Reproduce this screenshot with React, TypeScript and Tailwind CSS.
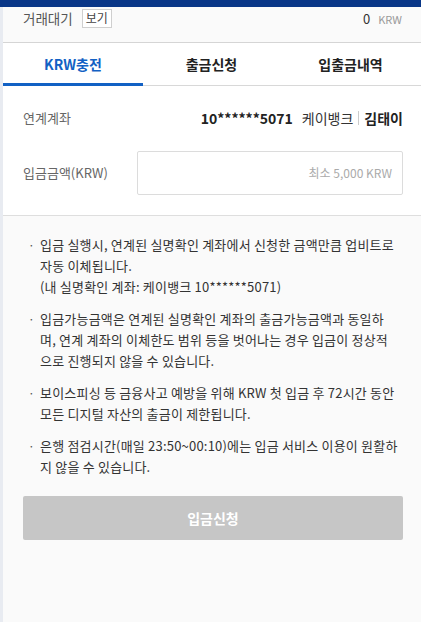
import React from "react";

const font = { fontFamily: '"Noto Sans CJK KR", "Noto Sans", sans-serif' };

export default function App() {
  const bullets: string[][] = [
    [
      "입금 실행시, 연계된 실명확인 계좌에서 신청한 금액만큼 업비트로",
      "자동 이체됩니다.",
      "(내 실명확인 계좌: 케이뱅크 10******5071)",
    ],
    [
      "입금가능금액은 연계된 실명확인 계좌의 출금가능금액과 동일하",
      "며, 연계 계좌의 이체한도 범위 등을 벗어나는 경우 입금이 정상적",
      "으로 진행되지 않을 수 있습니다.",
    ],
    [
      "보이스피싱 등 금융사고 예방을 위해 KRW 첫 입금 후 72시간 동안",
      "모든 디지털 자산의 출금이 제한됩니다.",
    ],
    [
      "은행 점검시간(매일 23:50~00:10)에는 입금 서비스 이용이 원활하",
      "지 않을 수 있습니다.",
    ],
  ];
  return (
    <div className="w-[421px] h-[622px] overflow-hidden flex flex-col bg-[#fafafa]" style={font}>
      <div className="h-[7px] bg-[#093687] shrink-0" />
      <div className="flex flex-1 min-h-0">
        <div className="w-[3px] bg-[#e8ebf1] shrink-0" />
        <div className="flex-1 flex flex-col min-w-0">
          {/* top status */}
          <div className="h-[36px] flex items-start justify-between pl-[20px] pr-[19px] border-b border-[#d5d5d5]">
            <div className="flex items-center gap-[9px] pt-[1px]">
              <span className="text-[13.5px] text-[#555] leading-[20px]">거래대기</span>
              <span className="border border-[#cfcfcf] bg-white text-[12px] text-[#444] leading-[16px] px-[3px] h-[19px] flex items-center">
                보기
              </span>
            </div>
            <div className="flex items-center gap-[8px] pt-[4px]">
              <span className="text-[13px] text-[#333] leading-[16px]">0</span>
              <span className="text-[11px] text-[#999] leading-[16px]">KRW</span>
            </div>
          </div>
          {/* tabs */}
          <div className="h-[43px] bg-white flex border-b border-[#d8d8d8]">
            <div className="w-[140px] flex items-center justify-center relative">
              <span className="text-[14px] font-bold text-[#1261c4]">KRW충전</span>
              <div className="absolute left-0 right-0 bottom-[-1px] h-[3px] bg-[#1261c4]" />
            </div>
            <div className="w-[137px] flex items-center justify-center">
              <span className="text-[14px] font-bold text-[#222]">출금신청</span>
            </div>
            <div className="flex-1 flex items-center justify-center">
              <span className="text-[14px] font-bold text-[#222]">입출금내역</span>
            </div>
          </div>
          {/* form */}
          <div className="bg-white border-b border-[#dedede] pl-[20px] pr-[18px] pt-[20px] pb-[20px]">
            <div className="flex items-center justify-between h-[24px]">
              <span className="text-[13px] text-[#666]">연계계좌</span>
              <div className="flex items-center">
                <span className="text-[14px] font-bold text-[#222]">10******5071</span>
                <span className="text-[14px] text-[#333] ml-[9px]">케이뱅크</span>
                <span className="w-px h-[14px] bg-[#ccc] mx-[5px]" />
                <span className="text-[14px] font-bold text-[#222]">김태이</span>
              </div>
            </div>
            <div className="flex items-center mt-[21px]">
              <span className="w-[114px] text-[13px] text-[#666] shrink-0">입금금액(KRW)</span>
              <div className="flex-1 h-[44px] border border-[#dcdcdc] rounded-[2px] bg-white flex items-center justify-end pr-[10px]">
                <span className="text-[12px] text-[#aaa]">최소 5,000 KRW</span>
              </div>
            </div>
          </div>
          {/* notes */}
          <div className="pl-[25px] pr-[10px] pt-[18px] flex flex-col gap-[11px]">
            {bullets.map((lines, i) => (
              <div key={i} className="flex">
                <span className="w-[12px] shrink-0 text-[12px] text-[#555] leading-[21px]">·</span>
                <div className="text-[13px] text-[#333] leading-[21px] tracking-[0.2px] whitespace-nowrap">
                  {lines.map((l, j) => (
                    <div key={j}>{l}</div>
                  ))}
                </div>
              </div>
            ))}
          </div>
          <div className="pl-[20px] pr-[18px] pt-[19px]">
            <div className="h-[44px] rounded-[2px] bg-[#c6c6c6] flex items-center justify-center">
              <span className="text-[14px] font-bold text-white">입금신청</span>
            </div>
          </div>
        </div>
      </div>
    </div>
  );
}
